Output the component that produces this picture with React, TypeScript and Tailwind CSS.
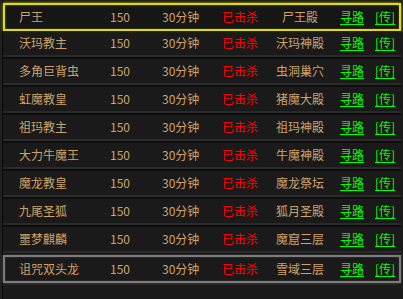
const bosses = [
  { name: "尸王", place: "尸王殿" },
  { name: "沃玛教主", place: "沃玛神殿" },
  { name: "多角巨背虫", place: "虫洞巢穴" },
  { name: "虹魔教皇", place: "猪魔大殿" },
  { name: "祖玛教主", place: "祖玛神殿" },
  { name: "大力牛魔王", place: "牛魔神殿" },
  { name: "魔龙教皇", place: "魔龙祭坛" },
  { name: "九尾圣狐", place: "狐月圣殿" },
  { name: "噩梦麒麟", place: "魔窟三层" },
  { name: "诅咒双头龙", place: "雪域三层" },
];

const Row = ({ name, place, variant }: { name: string; place: string; variant: "active" | "last" | "plain" }) => {
  const box =
    variant === "active"
      ? "h-[28px] border-2 border-[#e0e000] shadow-[0_0_3px_#b8b800,inset_0_0_2px_#6a6a00] bg-[#161616] pl-[14px]"
      : variant === "last"
        ? "h-[28px] border-2 border-[#7c7c7c] shadow-[0_0_3px_#555,inset_0_0_2px_#444] bg-[#1a1a1a] pl-[14px]"
        : "h-[28px] border-b-2 border-b-[#0c0c0c] shadow-[inset_0_-3px_0_-1px_#2a2a2a] bg-[#1a1a1a] pl-[16px] pb-[2px]"

  return (
    <div className={`grid grid-cols-[91px_52px_60px_42px_72px_39px_auto] items-center ${box}`}>
      <span className="text-[#cfa36b]">{name}</span>
      <span className="text-[#cfa36b]">150</span>
      <span className="text-[#cfa36b]">30分钟</span>
      <span className="text-[#ff0000]">已击杀</span>
      <span className="text-[#cfa36b] text-center">{place}</span>
      <span className="pl-[4px] text-[#00ff00] underline underline-offset-2">寻路</span>
      <span className="text-[#00ff00] underline underline-offset-2">[传]</span>
    </div>
  )
}

export default function App() {
  return (
    <div className="w-[403px] h-[299px] bg-[#202020] pl-[2px] overflow-hidden font-['Noto_Sans_CJK_SC',sans-serif] text-[12px] leading-none">
      <div className="h-full border-l border-[#0a0a0a] bg-[#1a1a1a] pt-[3px] pr-[2px]">
        {bosses.map((b, i) => (
          <Row
            key={b.name}
            name={b.name}
            place={b.place}
            variant={i === 0 ? "active" : i === bosses.length - 1 ? "last" : "plain"}
          />
        ))}
      </div>
    </div>
  )
}
